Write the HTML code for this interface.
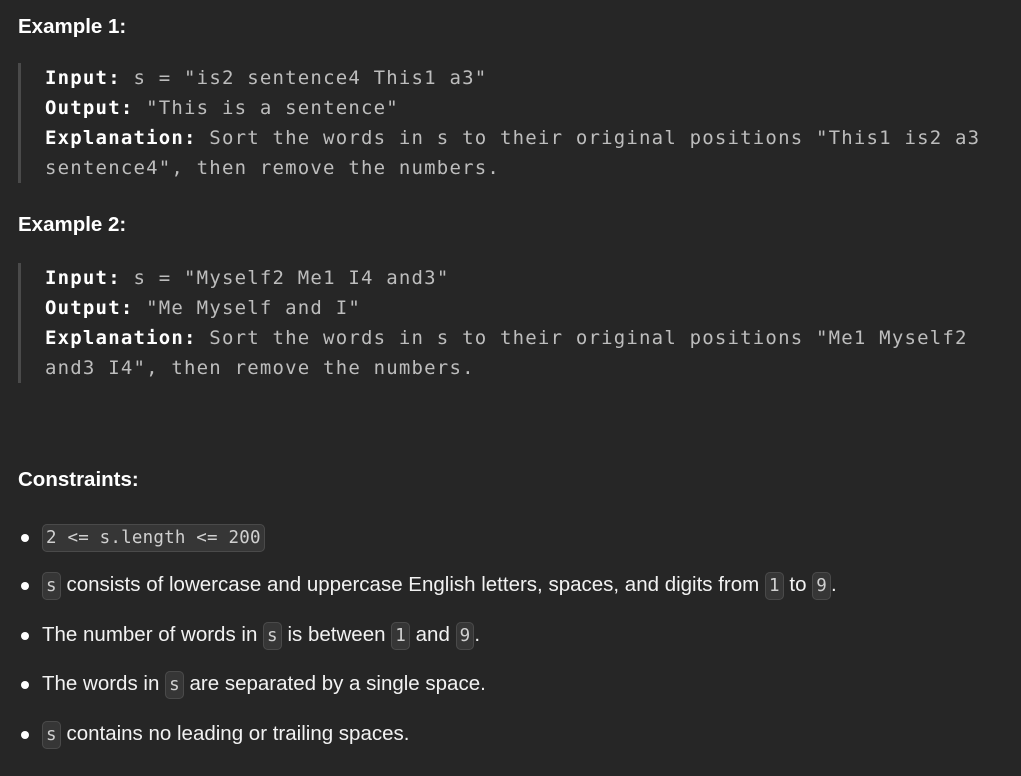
<!DOCTYPE html>
<html><head><meta charset="utf-8"><style>
html,body{margin:0;padding:0;background:#262626;width:1021px;height:776px;overflow:hidden}
body{font-family:"Liberation Sans",sans-serif;color:#fff;position:relative}
.h{position:absolute;left:18px;font-weight:bold;font-size:20.5px;color:#fff}
.pre{position:absolute;left:18px;border-left:3px solid #4a4a4a;padding-left:24px;font-family:"DejaVu Sans Mono",monospace;font-size:19px;letter-spacing:1.2px;line-height:30px;color:#bdbdbd;white-space:pre}
.pre b{color:#fff}
ul{position:absolute;left:0;top:512px;margin:0;padding:0;list-style:none}
li{position:absolute;left:42px;font-size:20.5px;white-space:nowrap;height:30px;line-height:30px;color:#f2f2f2}
li:before{content:"";position:absolute;left:-21px;top:12px;width:8px;height:8px;border-radius:50%;background:#fff}
code{font-family:"DejaVu Sans Mono",monospace;font-size:17.5px;letter-spacing:0.2px;background:#363636;border:1px solid #4a4a4a;border-radius:5px;padding:3px 3px;color:#d0d0d0}
</style></head><body>
<div class="h" style="top:15px">Example 1:</div>
<div class="pre" style="top:63px;height:120px"><b>Input:</b> s = "is2 sentence4 This1 a3"
<b>Output:</b> "This is a sentence"
<b>Explanation:</b> Sort the words in s to their original positions "This1 is2 a3
sentence4", then remove the numbers.</div>
<div class="h" style="top:213px">Example 2:</div>
<div class="pre" style="top:263px;height:120px"><b>Input:</b> s = "Myself2 Me1 I4 and3"
<b>Output:</b> "Me Myself and I"
<b>Explanation:</b> Sort the words in s to their original positions "Me1 Myself2
and3 I4", then remove the numbers.</div>
<div class="h" style="top:468px">Constraints:</div>
<ul>
<li style="top:10px"><code>2 &lt;= s.length &lt;= 200</code></li>
<li style="top:58px"><code>s</code> consists of lowercase and uppercase English letters, spaces, and digits from <code>1</code> to <code>9</code>.</li>
<li style="top:108px">The number of words in <code>s</code> is between <code>1</code> and <code>9</code>.</li>
<li style="top:157px">The words in <code>s</code> are separated by a single space.</li>
<li style="top:207px"><code>s</code> contains no leading or trailing spaces.</li>
</ul>
</body></html>
